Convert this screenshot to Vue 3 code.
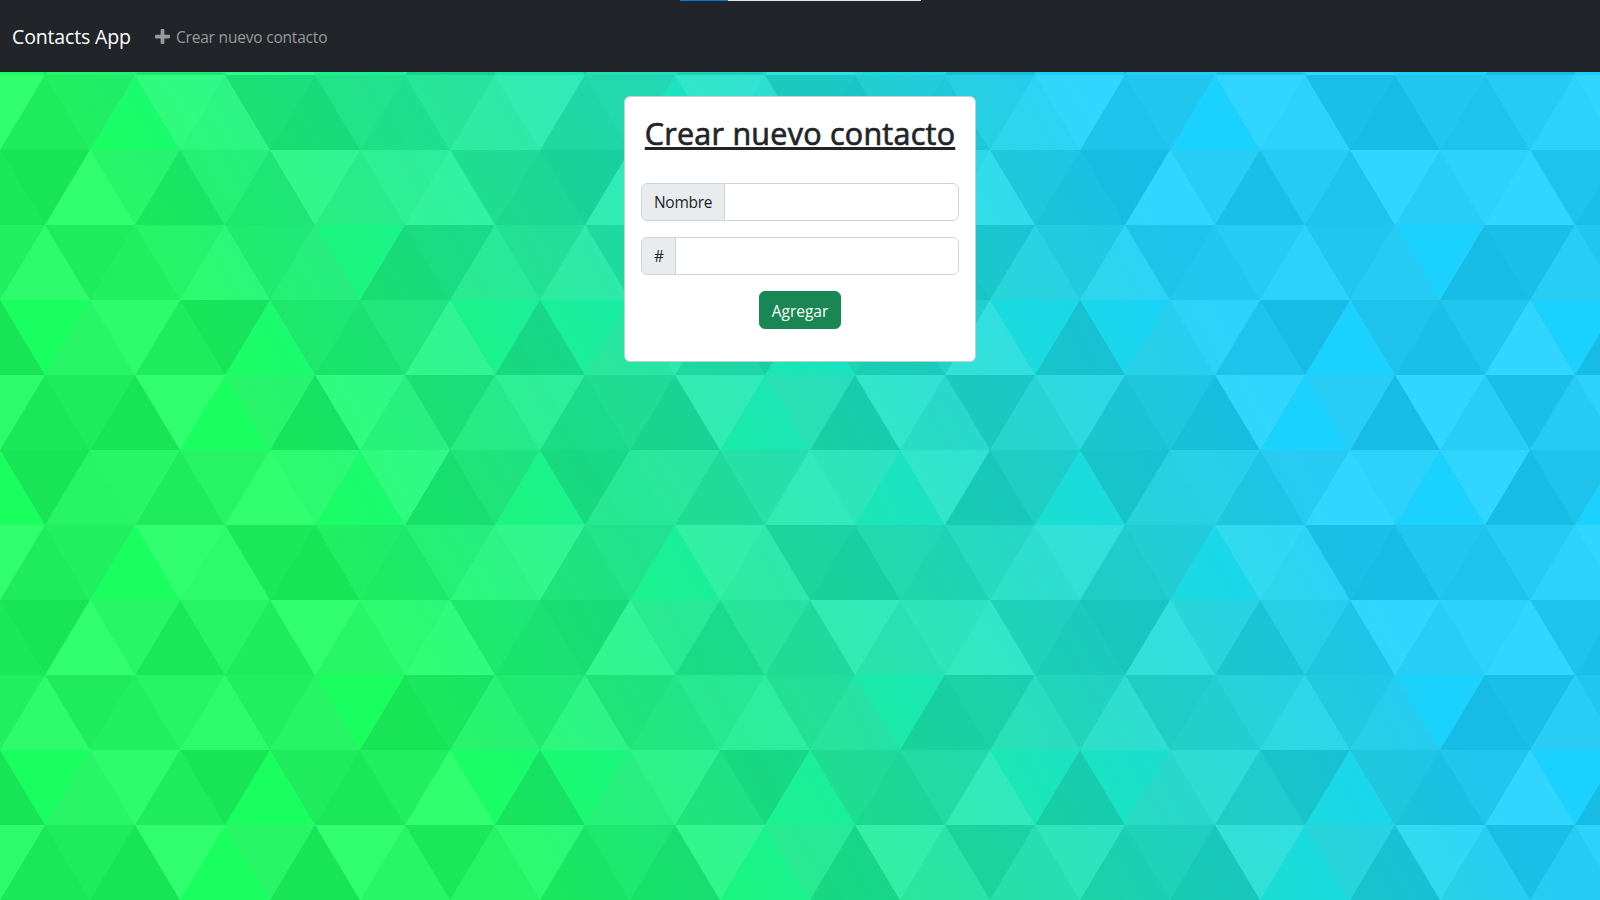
<script setup>
import { ref } from 'vue'

const name = ref('')
const phone = ref('')

// Overlay greys per triangle row; "-" leaves the gradient untouched.
// Each row alternates triangles pointing up and down, six of each per tile.
const rows = [
  { up: '- 9 4 F - 0', down: '0 A 9 D F 4' },
  { up: '4 - D 0 4 D', down: 'F 6 F 2 6 9' },
  { up: '2 F 2 4 A F', down: '0 A 9 F D 4' },
  { up: 'D 6 D 9 0 A', down: '6 4 9 6 - 2' },
  { up: '0 A 4 - 2 F', down: '- D 0 4 6 -' },
  { up: '2 0 - 0 A 9', down: 'D 4 F A F 2' },
]

const triangles = rows.flatMap((row, r) => {
  const top = r * 150
  const bottom = top + 150
  const odd = r % 2
  const build = (codes, offset, apex, base) =>
    codes.split(' ').flatMap((c, i) => {
      if (c === '-') return []
      const x = offset + i * 180
      const xs = x === 0 ? [0, 1080] : [x]
      return xs.map((cx) => ({
        fill: '#' + c.repeat(3),
        points: `${cx} ${apex} ${cx - 90} ${base} ${cx + 90} ${base}`,
      }))
    })
  return [
    ...build(row.up, odd ? 90 : 0, top, bottom),
    ...build(row.down, odd ? 0 : 90, bottom, top),
  ]
})
</script>

<template>
  <div class="page">
    <svg class="backdrop" width="100%" height="100%" aria-hidden="true">
      <defs>
        <linearGradient id="sweep" gradientUnits="userSpaceOnUse" x1="0" x2="0" y1="0" y2="100%" gradientTransform="rotate(240)">
          <stop offset="0" stop-color="#1aff60" />
          <stop offset="1" stop-color="#1ad1ff" />
        </linearGradient>
        <pattern id="tiles" patternUnits="userSpaceOnUse" width="540" height="450" viewBox="0 0 1080 900">
          <g fill-opacity="0.1">
            <polygon v-for="(t, i) in triangles" :key="i" :fill="t.fill" :points="t.points" />
          </g>
        </pattern>
      </defs>
      <rect width="100%" height="100%" fill="url(#sweep)" />
      <rect width="100%" height="100%" fill="url(#tiles)" />
    </svg>

    <header class="navbar">
      <div class="progress"><span class="progress-done"></span></div>
      <a class="brand">Contacts App</a>
      <a class="nav-link">
        <svg class="plus" viewBox="0 32 448 448" aria-hidden="true">
          <path d="M416 200H280V64c0-17.670-14.330-32-32-32h-48c-17.670 0-32 14.330-32 32v136H32c-17.670 0-32 14.330-32 32v48c0 17.670 14.330 32 32 32h136v136c0 17.670 14.330 32 32 32h48c17.670 0 32-14.330 32-32V312h136c17.670 0 32-14.330 32-32v-48c0-17.670-14.330-32-32-32z" />
        </svg>
        <span class="nav-text">Crear nuevo contacto</span>
      </a>
    </header>

    <main class="content">
      <form class="card" @submit.prevent>
        <h2 class="title"><span>Crear nuevo contacto</span></h2>
        <label class="group">
          <span class="addon addon-name">Nombre</span>
          <input v-model="name" class="field" type="text" />
        </label>
        <label class="group">
          <span class="addon addon-phone">#</span>
          <input v-model="phone" class="field" type="text" />
        </label>
        <button class="submit" type="submit">Agregar</button>
      </form>
    </main>
  </div>
</template>

<style>
body {
  margin: 0;
  overflow: hidden;
}
</style>

<style scoped>
.page {
  position: relative;
  height: 100vh;
  overflow: hidden;
  color: #212529;
  font-family: "Open Sans", "Noto Sans", sans-serif;
  font-size: 15.5px;
  line-height: 24px;
}
.backdrop {
  position: absolute;
  inset: 0;
}
.navbar {
  position: relative;
  display: flex;
  align-items: center;
  height: 72px;
  padding: 0 12px;
  box-sizing: border-box;
  background: #212529;
}
.progress {
  position: absolute;
  top: 0;
  left: 680px;
  width: 241px;
  height: 1px;
  background: #e6e6e6;
}
.progress-done {
  display: block;
  width: 48px;
  height: 1px;
  background: #0078d7;
}
.brand {
  width: 119px;
  margin-right: 24px;
  padding-top: 2px;
  color: #fff;
  font-size: 19.5px;
  line-height: 30px;
  letter-spacing: -0.15px;
  white-space: nowrap;
}
.nav-link {
  display: flex;
  align-items: center;
  padding-top: 1px;
  color: #97999b;
}
.plus {
  width: 15px;
  height: 15px;
  margin-right: 6px;
  fill: #97999b;
}
.nav-text {
  letter-spacing: -0.2px;
  white-space: nowrap;
}
.content {
  position: relative;
  display: flex;
  justify-content: center;
  padding-top: 24px;
}
.card {
  display: flex;
  flex-direction: column;
  align-items: center;
  gap: 16px;
  box-sizing: border-box;
  width: 352px;
  height: 266px;
  padding: 16px;
  border: 1px solid #c8cccf;
  border-radius: 6px;
  background: #fff;
}
.title {
  box-sizing: border-box;
  height: 38px;
  margin: 0 0 16px;
  padding-top: 1px;
  font-size: 30.5px;
  font-weight: 500;
  line-height: 38px;
  letter-spacing: 0.25px;
  white-space: nowrap;
  text-decoration: underline;
  text-decoration-thickness: 3px;
  text-underline-offset: 2px;
  text-decoration-skip-ink: none;
  -webkit-text-stroke: 0.7px #212529;
}
.group {
  display: flex;
  align-self: stretch;
  height: 38px;
}
.addon {
  box-sizing: border-box;
  padding: 6px 0 6px 12px;
  border: 1px solid #ced4da;
  border-radius: 6px 0 0 6px;
  background: #e9ecef;
}
.addon-name {
  width: 84px;
  letter-spacing: -0.3px;
}
.addon-phone {
  width: 35px;
}
.field {
  flex: 1;
  min-width: 0;
  box-sizing: border-box;
  margin: 0 0 0 -1px;
  padding: 6px 12px;
  border: 1px solid #ced4da;
  border-radius: 0 6px 6px 0;
  outline: none;
  background: #fff;
  color: inherit;
  font: inherit;
}
.submit {
  box-sizing: border-box;
  width: 82px;
  height: 38px;
  padding: 1px 0 0;
  border: 1px solid #198754;
  border-radius: 6px;
  background: #198754;
  color: #fff;
  font: inherit;
}
</style>
